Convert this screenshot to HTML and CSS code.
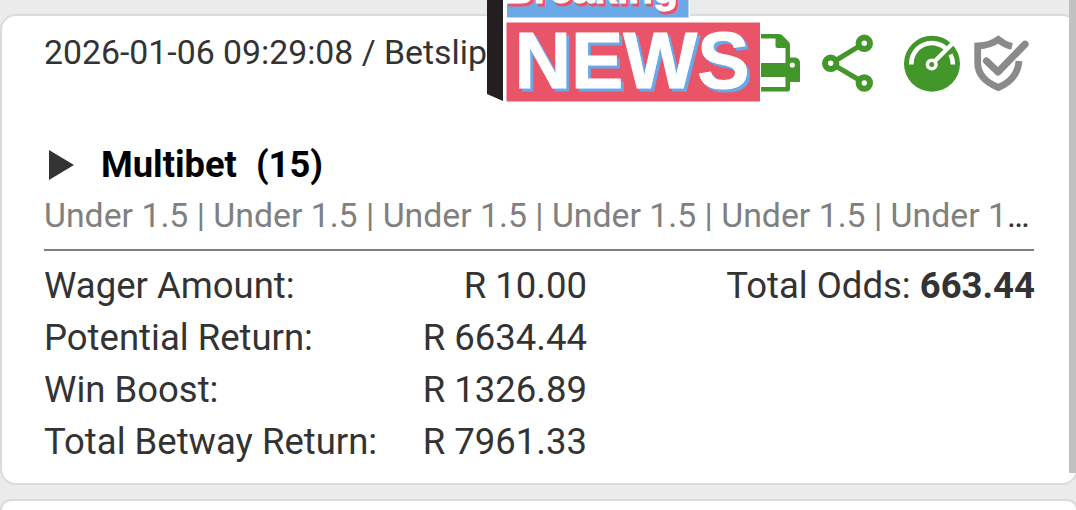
FILE: index.html
```html
<!DOCTYPE html>
<html lang="en">
<head>
    <meta charset="UTF-8">
    <meta name="viewport" content="width=device-width, initial-scale=1.0">
    <title>Betslip</title>
    <link rel="stylesheet" href="styles.css">
</head>
<body>
    <div class="betslip">
        <div class="betslip-header">
            <span class="betslip-date">2026-01-06 09:29:08 / Betslip</span>
            <div class="actions">
                <svg class="icon print" width="60" height="60" viewBox="0 0 60 60">
                    <path fill="#43962a" fill-rule="evenodd" d="M12 2H39Q41 2 42.500 3.500L48.500 9.500Q50 11 50 13V25.500H54Q60 25.500 60 31V50H50V57Q50 59.500 47.500 59.500H12Q10 59.500 10 57V50H0V31Q0 25.500 6 25.500H10V4Q10 2 12 2ZM14.500 6.500V31H45.500V16H37.500Q35.500 16 35.500 14V6.500ZM14.500 45V55H45.500V45Z"/>
                    <circle cx="52.300" cy="33" r="2.600" fill="#fff"/>
                </svg>
                <svg class="icon share" width="52" height="60" viewBox="0 0 52 60" fill="none" stroke="#43962a">
                    <path stroke-width="5" d="M13.700 28.500L37.300 14.200M13.700 34.200L37.300 48"/>
                    <circle cx="8.700" cy="31.300" r="5.700" stroke-width="6"/>
                    <circle cx="42.300" cy="11.300" r="5.700" stroke-width="6"/>
                    <circle cx="42.300" cy="51" r="5.700" stroke-width="6"/>
                </svg>
                <svg class="icon gauge" width="56" height="60" viewBox="0 0 56 60" fill="none" stroke="#fff">
                    <circle cx="28" cy="31.700" r="28" fill="#43962a" stroke="none"/>
                    <path stroke-width="4.600" d="M7.300 32.500A20.700 20.700 0 0 1 41.500 16M46.500 22.500Q48.900 27 48.900 32.500"/>
                    <path stroke-width="4.200" d="M30 30L50 10"/>
                    <circle cx="27.700" cy="32.500" r="4.300" fill="#43962a" stroke-width="3.600"/>
                </svg>
                <svg class="icon shield" width="56" height="60" viewBox="0 0 56 60" fill="none" stroke="#8a8a8a">
                    <path stroke-width="6.800" d="M38 14.500Q30 12.500 24.300 7.500Q16 13.500 3.700 14V31Q3.700 47 24.300 55.500Q43.500 47.500 45 29"/>
                    <path stroke-width="7.200" stroke-linecap="round" stroke-linejoin="round" d="M12.500 29L24 40L51 12.200"/>
                </svg>
            </div>
        </div>

        <div class="bet-title">
            <svg class="arrow" width="26" height="30" viewBox="0 0 26 30"><path fill="#333" d="M0 0L25 15L0 30Z"/></svg>
            <span>Multibet</span>
            <span class="count">(15)</span>
        </div>
        <div class="selections"><span>Under 1.5 | Under 1.5 | Under 1.5 | Under 1.5 | Under 1.5 | Under 1.5 | Under 1.5</span></div>

        <div class="summary">
            <div class="amounts">
                <span>Wager Amount:</span><span class="value">R 10.00</span>
                <span>Potential Return:</span><span class="value">R 6634.44</span>
                <span>Win Boost:</span><span class="value">R 1326.89</span>
                <span>Total Betway Return:</span><span class="value">R 7961.33</span>
            </div>
            <div class="odds">Total Odds: <b>663.44</b></div>
        </div>
    </div>
    <div class="betslip next"></div>

    <div class="scrollbar"></div>

    <svg class="news-sticker" width="282" height="104" viewBox="0 0 282 104">
        <path fill="#231f20" d="M7 0H23V101L7 94Z"/>
        <path fill="#fff" d="M23 0H210V21H281V102.500H26L23 101Z"/>
        <path fill="#6aa8e8" d="M27 0H208.500V17.500H27Z"/>
        <path fill="#ea5468" d="M26.500 22.500H280V101.500H26.500Z"/>
        <text class="breaking shade" x="26.500" y="6" textLength="174">Breaking</text>
        <text class="breaking" x="24" y="3" textLength="174">Breaking</text>
        <text class="news shade" x="37.500" y="90.500" textLength="235" lengthAdjust="spacingAndGlyphs">NEWS</text>
        <text class="news" x="34.500" y="87.500" textLength="235" lengthAdjust="spacingAndGlyphs">NEWS</text>
    </svg>
</body>
</html>
```
FILE: styles.css
```css
* {
    margin: 0;
    padding: 0;
    box-sizing: border-box;
}

body {
    position: relative;
    height: 510px;
    overflow: hidden;
    padding-top: 14px;
    background-color: #ebebeb;
    font-family: Roboto, sans-serif;
    font-size: 36.5px;
    color: #333;
}

.betslip {
    height: 471px;
    margin-right: -2px;
    padding: 0 42px;
    border: 2px solid #dbdbdb;
    border-radius: 16px;
    background-color: #fff;
}

.next {
    height: 11px;
    margin-top: 14px;
    border-bottom: none;
    border-radius: 16px 16px 0 0;
}

.betslip-header {
    display: flex;
    justify-content: space-between;
    height: 122px;
    padding-top: 16px;
}

.betslip-date {
    font-size: 33.8px;
    line-height: 42px;
    white-space: nowrap;
}

.actions {
    display: flex;
    height: 60px;
    margin-right: 4px;
}

.share {
    margin-left: 22px;
}

.gauge {
    margin-left: 30px;
}

.shield {
    margin-left: 14px;
}

.bet-title {
    display: flex;
    align-items: center;
    height: 54px;
    font-size: 36.3px;
    line-height: 44px;
    font-weight: bold;
    color: #000;
}

.arrow {
    margin-left: 5px;
    margin-right: 26px;
}

.count {
    margin-left: 19px;
}

.selections {
    height: 59px;
    border-bottom: 2px solid #808080;
    font-size: 33.8px;
    line-height: 47px;
    white-space: nowrap;
    overflow: hidden;
    text-overflow: ellipsis;
}

.selections span {
    color: #808080;
}

.summary {
    display: flex;
    justify-content: space-between;
    padding-top: 9px;
    line-height: 52px;
}

.amounts {
    display: grid;
    grid-template-columns: 343px 200px;
}

.value {
    text-align: right;
}

.odds {
    margin-right: -1px;
}

.scrollbar {
    position: absolute;
    top: 0;
    right: 0;
    width: 7px;
    height: 473px;
    background-color: #c1c1c1;
}

.news-sticker {
    position: absolute;
    top: 0;
    left: 480px;
}

.news-sticker text {
    font-family: "Liberation Sans", Arial, sans-serif;
    font-weight: bold;
    fill: #fff;
    stroke: #fff;
    stroke-width: 1px;
}

.breaking {
    font-size: 41px;
}

.news {
    font-size: 80px;
}

.news-sticker .breaking.shade {
    fill: #ea5468;
    stroke: #ea5468;
}

.news-sticker .news.shade {
    fill: #6aa8e8;
    stroke: #6aa8e8;
}
```
